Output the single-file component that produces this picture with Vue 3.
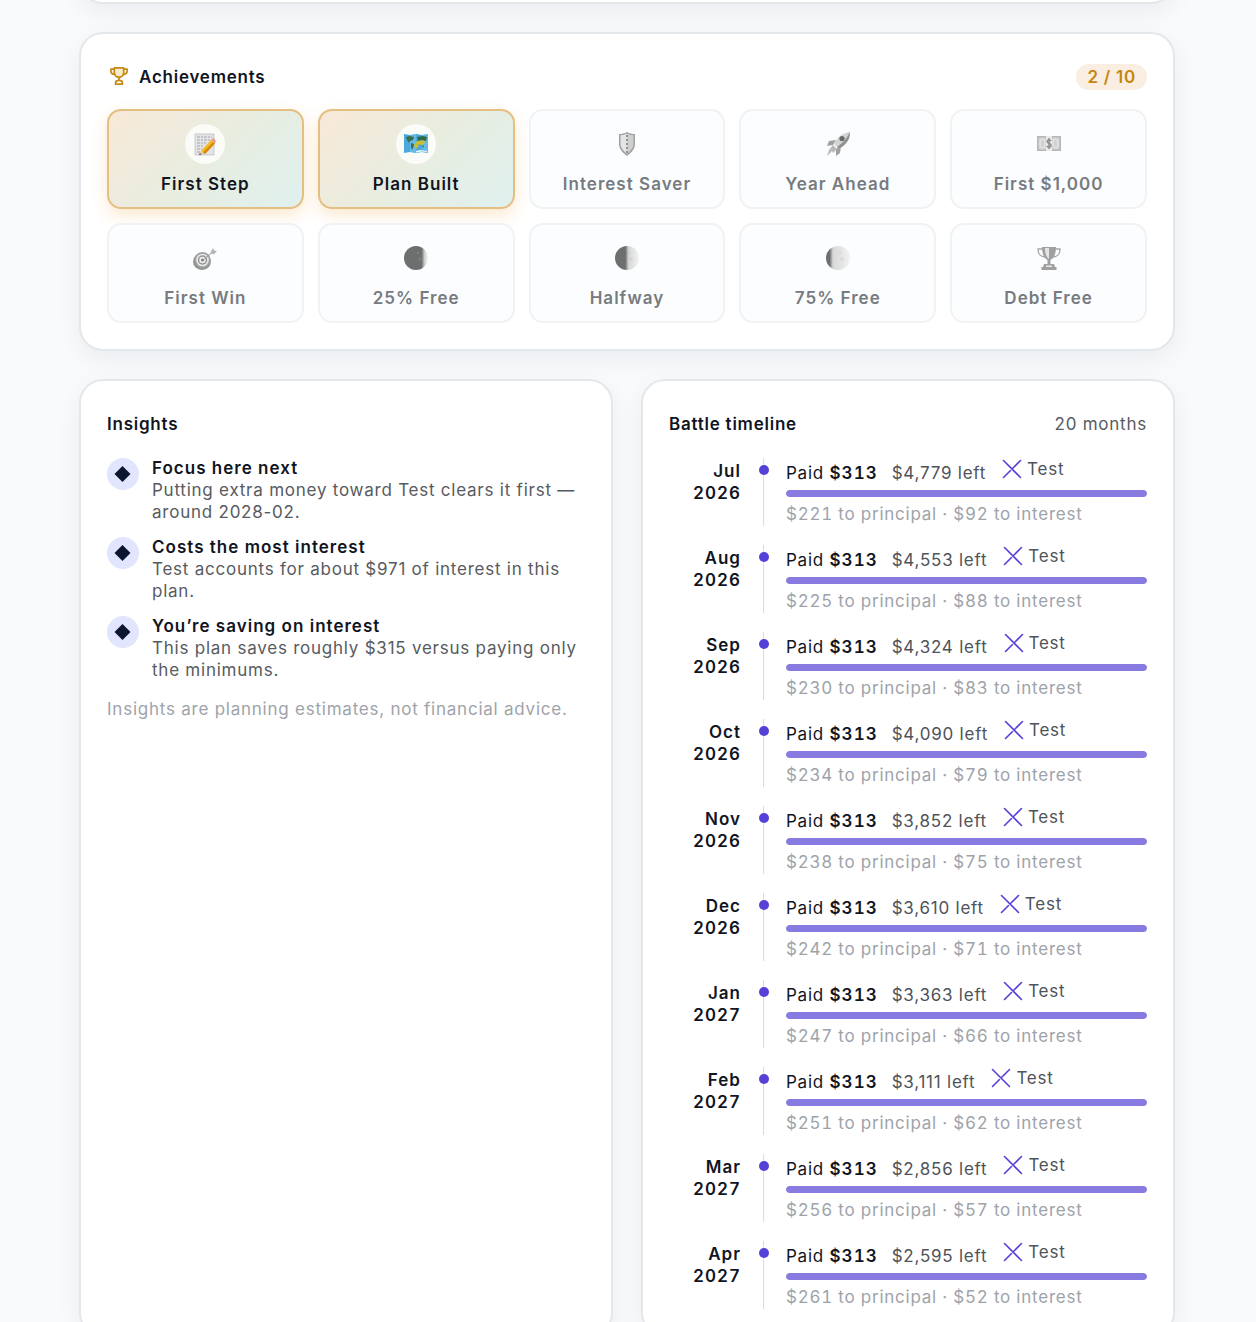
<template>
  <main class="page">
    <section class="card card-above" aria-hidden="true"></section>

    <section class="card">
      <header class="card-head">
        <h2 class="card-title">
          <svg class="title-icon" viewBox="2 2 20 21" fill="none" stroke="currentColor" stroke-width="2" stroke-linejoin="round" stroke-linecap="round">
            <path fill="#fbecc8" d="M6.500 3h11v5.500c0 3.200-2.300 5.500-5.500 5.500s-5.500-2.300-5.500-5.500z" />
            <path d="M6.500 4.500H2.500v1.500c0 2.600 1.700 4.500 4.500 4.500M17.500 4.500h4v1.500c0 2.600-1.700 4.500-4.500 4.500M12 14v3.500M8 22v-1.500c0-1.800 1.500-3 4-3s4 1.200 4 3V22z" />
          </svg>
          Achievements
        </h2>
        <span class="count">2 / 10</span>
      </header>

      <ul class="badges">
        <li v-for="badge in badges" :key="badge.name" :class="['badge', { earned: badge.earned }]">
          <span class="badge-icon">
            <!-- memo and pencil -->
            <svg v-if="badge.icon === 'memo'" viewBox="0 0 24 24">
              <path fill="#e3e4e6" stroke="#b9bcc0" stroke-width=".7" d="M2 2h19v21H2z" />
              <path stroke="#a4a7ab" stroke-width="1" stroke-dasharray="3 1 2 1" d="M4 5h15M4 8h14M4 11h9M4 14h7M4 17h5M4 20h4" />
              <path fill="#f5b921" d="M8 19L18 8l4 3.500L12 22z" />
              <path fill="#d78a12" d="M10 20.500L20 10l2 1.500L12 22z" />
              <path fill="#ef9a8d" d="M18 8l1.500-1.700c.8-.8 3.800 1.800 3.300 3L22 11.500z" />
              <path fill="#e7c79b" d="M8 19l4 3-5.500 1z" />
              <path fill="#444" d="M6.900 21l1.600 1.600-2.500.5z" />
            </svg>

            <!-- world map -->
            <svg v-else-if="badge.icon === 'map'" viewBox="0 0 24 24">
              <path fill="#49a8dc" d="M0 2l6 1 6-1 6 1 6-1v19l-6-1-6 1-6-1-6 1z" />
              <path fill="#7cc7ec" d="M6 3l6-1v19l-6-1zM18 3l6-1v19l-6-1z" opacity=".6" />
              <path fill="#3d6d4d" d="M2 5l4-1 4 1-1 3-3 1-1 2-2-3zM7 11l3 1-1 4-1 2-1-3z" />
              <path fill="#c9bf32" d="M12 10l4-2 5 1-1 3-3 1-2-1-1 3-2 2-2-4z" />
              <path fill="#2f6b4a" d="M13 5l6-1 4 1-1 4-4-1-4 1zM18 13l2 1-1 2z" />
              <path fill="#e9f7fc" d="M12 19l4-1 7 1v1l-5-.500-6 1z" />
            </svg>

            <!-- shield -->
            <svg v-else-if="badge.icon === 'shield'" viewBox="0 0 24 24">
              <path fill="#8a8988" d="M12 0c2.500 1.500 5 2 8 2v10c0 5-4 9-8 12-4-3-8-7-8-12V2c3 0 5.500-.5 8-2z" />
              <path fill="#c4c4c4" d="M12 1.500c2 1 4 1.500 6.500 1.700V12c0 4-3.500 7.500-6.500 10z" />
              <path fill="#e0e0e0" d="M12 1.500c-2 1-4 1.500-6.500 1.700V12c0 4 3.500 7.500 6.500 10z" />
              <path stroke="#777" stroke-width="2" stroke-dasharray="2 2" d="M12 3v18" />
            </svg>

            <!-- rocket -->
            <svg v-else-if="badge.icon === 'rocket'" viewBox="0 0 24 24">
              <path fill="#8a8a8a" d="M10 8L3 9l-2 5 6-1zM15 14l-1 7-4 3 0-7z" />
              <path fill="#c9c9c9" d="M24 0c0 7-3 12-11 17l-5-5C12 4 17 1 24 0z" />
              <path fill="#777" d="M24 0c0 7-3 12-11 17l-2-2c6-4 10-9 13-15z" />
              <circle cx="16" cy="6.500" r="2.600" fill="#444" />
              <path fill="#a8a8a8" d="M7 13l4 4-4 4-1-2-5 5 2-6z" />
            </svg>

            <!-- banknote -->
            <svg v-else-if="badge.icon === 'cash'" viewBox="0 0 24 24">
              <path fill="#a6a6a6" d="M0 4h24v15H0z" />
              <path fill="#c8c8c8" d="M1.500 5.500h21v12h-21z" />
              <path fill="#e6e6e6" d="M9 4h6v15H9z" />
              <ellipse cx="5.500" cy="11.500" rx="2.500" ry="4.500" fill="none" stroke="#ededed" />
              <ellipse cx="18.500" cy="11.500" rx="2.500" ry="4.500" fill="none" stroke="#ededed" />
              <path fill="none" stroke="#6f6f6f" stroke-width="1.400" d="M14 9c-1-1.500-4-1.300-4 .6 0 2.400 4.200 1.400 4.200 3.800 0 2-3.400 2.200-4.400.4M12 6v11" />
            </svg>

            <!-- dartboard -->
            <svg v-else-if="badge.icon === 'target'" viewBox="0 0 24 24">
              <ellipse cx="9" cy="15.500" rx="9" ry="8.500" fill="#777" />
              <circle cx="9.500" cy="14" r="8" fill="#8b8b8b" />
              <circle cx="9.500" cy="14" r="6.300" fill="#e3e3e3" />
              <circle cx="9.500" cy="14" r="4.700" fill="#7c7c7c" />
              <circle cx="9.500" cy="14" r="3.200" fill="#ededed" />
              <circle cx="9.500" cy="14" r="1.600" fill="#666" />
              <path stroke="#777" stroke-width="1" d="M10 14L21 5" />
              <path fill="#a3a3a3" d="M17.500 6.500L20 2l1 2.500 3 .5-3.500 3.500z" />
            </svg>

            <!-- moon phases, `lit` is the left edge of the bright side -->
            <svg v-else-if="badge.icon === 'moon'" viewBox="0 0 24 24">
              <defs>
                <linearGradient :id="'moon' + badge.lit">
                  <stop :offset="(badge.lit - 7) + '%'" stop-color="#4a4c4b" />
                  <stop :offset="(badge.lit + 7) + '%'" stop-color="#cfcfcf" />
                  <stop offset="100%" stop-color="#f0f0f0" />
                </linearGradient>
              </defs>
              <circle cx="12" cy="12" r="12" :fill="`url(#moon${badge.lit})`" />
              <circle cx="14" cy="7" r="1.500" fill="#999" opacity=".2" />
              <circle cx="16" cy="13" r="2" fill="#999" opacity=".2" />
            </svg>

            <!-- trophy -->
            <svg v-else viewBox="0 0 24 24">
              <path fill="none" stroke="#929292" stroke-width="1.400" d="M6 3H1c0 5 3 8 7 8M18 3h5c0 5-3 8-7 8" />
              <path fill="#8a8a8a" d="M5 1h14c0 7-2 11-5.500 13v4h-3v-4C7 12 5 8 5 1z" />
              <path fill="#dedede" d="M8 2h4v11c-3-2-4-6-4-11z" />
              <path fill="#8a8a8a" d="M7 18h10l1 3h1.500v3h-15v-3H6z" />
              <path fill="#e5e5e5" d="M9 19.500h6v1.500H9z" />
            </svg>
          </span>
          <span class="badge-name">{{ badge.name }}</span>
        </li>
      </ul>
    </section>

    <div class="columns">
      <section class="card">
        <header class="card-head">
          <h2 class="card-title">Insights</h2>
        </header>
        <ul class="insights">
          <li v-for="item in insights" :key="item.title" class="insight">
            <span class="insight-icon">
              <svg viewBox="0 0 16 16"><path fill="#0c1530" d="M7.500 0l8 8-8 8-8-8z" /></svg>
            </span>
            <div>
              <h3 class="insight-title">{{ item.title }}</h3>
              <p class="insight-text">{{ item.text }}</p>
            </div>
          </li>
        </ul>
        <p class="note">Insights are planning estimates, not financial advice.</p>
      </section>

      <section class="card">
        <header class="card-head">
          <h2 class="card-title">Battle timeline</h2>
          <span class="months">20 months</span>
        </header>
        <ol class="timeline">
          <li v-for="row in timeline" :key="row.month + row.year" class="row">
            <div class="date">{{ row.month }}<br>{{ row.year }}</div>
            <div class="rail"><span class="dot"></span></div>
            <div class="detail">
              <div class="summary">
                <span class="paid">Paid <strong>$313</strong></span>
                <span class="left">{{ row.left }} left</span>
                <span class="target">
                  <svg class="swords" viewBox="0 0 20 20" fill="none" stroke="currentColor" stroke-width="1.600" stroke-linecap="round">
                    <path d="M1.500 1.500l17 17M18.500 1.500l-7.500 7.500M8.500 11.500l-7 7" />
                  </svg>
                  Test
                </span>
              </div>
              <div class="bar"><div class="bar-fill" :style="{ width: row.share + '%' }"></div></div>
              <p class="split">{{ row.principal }} to principal · {{ row.interest }} to interest</p>
            </div>
          </li>
        </ol>
      </section>
    </div>
  </main>
</template>

<script setup>
const badges = [
  { name: 'First Step', icon: 'memo', earned: true },
  { name: 'Plan Built', icon: 'map', earned: true },
  { name: 'Interest Saver', icon: 'shield' },
  { name: 'Year Ahead', icon: 'rocket' },
  { name: 'First $1,000', icon: 'cash' },
  { name: 'First Win', icon: 'target' },
  { name: '25% Free', icon: 'moon', lit: 80 },
  { name: 'Halfway', icon: 'moon', lit: 50 },
  { name: '75% Free', icon: 'moon', lit: 22 },
  { name: 'Debt Free', icon: 'trophy' }
]

const insights = [
  { title: 'Focus here next', text: 'Putting extra money toward Test clears it first — around 2028-02.' },
  { title: 'Costs the most interest', text: 'Test accounts for about $971 of interest in this plan.' },
  { title: 'You’re saving on interest', text: 'This plan saves roughly $315 versus paying only the minimums.' }
]

const timeline = [
  { month: 'Jul', year: 2026, left: '$4,779', principal: '$221', interest: '$92', share: 100 },
  { month: 'Aug', year: 2026, left: '$4,553', principal: '$225', interest: '$88', share: 100 },
  { month: 'Sep', year: 2026, left: '$4,324', principal: '$230', interest: '$83', share: 100 },
  { month: 'Oct', year: 2026, left: '$4,090', principal: '$234', interest: '$79', share: 100 },
  { month: 'Nov', year: 2026, left: '$3,852', principal: '$238', interest: '$75', share: 100 },
  { month: 'Dec', year: 2026, left: '$3,610', principal: '$242', interest: '$71', share: 100 },
  { month: 'Jan', year: 2027, left: '$3,363', principal: '$247', interest: '$66', share: 100 },
  { month: 'Feb', year: 2027, left: '$3,111', principal: '$251', interest: '$62', share: 100 },
  { month: 'Mar', year: 2027, left: '$2,856', principal: '$256', interest: '$57', share: 100 },
  { month: 'Apr', year: 2027, left: '$2,595', principal: '$261', interest: '$52', share: 100 }
]
</script>

<style>
body {
  background: #f9fafc;
}
</style>

<style scoped>
.page {
  padding: 0 81px 28px 79px;
  display: flex;
  flex-direction: column;
  gap: 28px;
  overflow: hidden;
  font-family: Inter, "Liberation Sans", sans-serif;
  font-size: 17px;
  line-height: 22px;
  letter-spacing: 0.045em;
  color: #11151f;
}

h2, h3, p, ul, ol {
  margin: 0;
  padding: 0;
  font-size: inherit;
  list-style: none;
}

.card {
  box-sizing: border-box;
  min-width: 0;
  padding: 26px;
  background: #fff;
  border: 2px solid #e5e8eb;
  border-radius: 24px;
  box-shadow: 0 8px 24px rgba(15, 23, 42, 0.06);
}

/* tail of the card scrolled off the top */
.card-above {
  height: 60px;
  margin-top: -56px;
}

.card-head {
  display: flex;
  align-items: center;
  justify-content: space-between;
  height: 33px;
  margin-bottom: 16px;
}

.card-title {
  display: flex;
  align-items: center;
  font-weight: 600;
}

.title-icon {
  width: 18px;
  height: 18px;
  margin: 0 11px 2px 3px;
  color: #c58a14;
}

.count {
  padding: 2px 11px;
  border-radius: 13px;
  background: #f9eee1;
  color: #c5860f;
  font-weight: 600;
}

/* achievements */
.badges {
  display: grid;
  grid-template-columns: repeat(5, 1fr);
  gap: 14px;
}

.badge {
  display: flex;
  flex-direction: column;
  align-items: center;
  gap: 9px;
  padding: 13px 8px 12px;
  border: 2px solid #f0f2f3;
  border-radius: 14px;
  background: #fbfdfe;
  color: #777b80;
  font-weight: 600;
}

.badge-name,
.insight-title {
  letter-spacing: 0.06em;
}

.badge-icon {
  display: flex;
  align-items: center;
  justify-content: center;
  width: 40px;
  height: 40px;
  border-radius: 50%;
  opacity: 0.8;
}

.badge-icon svg {
  width: 24px;
  height: 24px;
}

.badge.earned {
  border-color: #e5be82;
  background: linear-gradient(135deg, #f9e9d8, #e8ede0 50%, #dff1ef);
  background-origin: border-box;
  box-shadow: 0 6px 16px rgba(240, 160, 50, 0.24);
  color: #11151f;
}

.earned .badge-icon {
  background: #fbfbf7;
  opacity: 1;
}

/* lower columns */
.columns {
  display: grid;
  grid-template-columns: 1fr 1fr;
  gap: 28px;
}

.insights {
  display: flex;
  flex-direction: column;
  gap: 13px;
  padding-top: 1px;
}

.insight {
  display: flex;
  gap: 13px;
}

.insight-icon {
  display: flex;
  flex: none;
  align-items: center;
  justify-content: center;
  width: 32px;
  height: 32px;
  margin-top: 1px;
  border-radius: 50%;
  background: #e1e5fd;
}

.insight-icon svg {
  width: 16px;
  height: 16px;
  overflow: visible;
}

.insight-title {
  font-weight: 600;
}

.insight-text,
.months {
  color: #575b61;
}

.note {
  margin-top: 17px;
  color: #9ea3aa;
}

.timeline {
  display: flex;
  flex-direction: column;
  gap: 19px;
  padding-top: 2px;
}

.row {
  display: grid;
  grid-template-columns: 72px 13px 1fr;
  column-gap: 16px;
  height: 68px;
}

.date {
  padding-top: 2px;
  text-align: right;
  font-weight: 600;
  letter-spacing: 0.06em;
  font-variant-numeric: tabular-nums;
}

.rail {
  display: flex;
  justify-content: center;
  padding-top: 7px;
  background: linear-gradient(#e6dcc6, #e6dcc6) center / 1px 100% no-repeat;
}

.dot {
  width: 10px;
  height: 10px;
  border-radius: 50%;
  background: #5540d8;
}

.summary {
  display: flex;
  align-items: flex-start;
  gap: 14px;
  height: 32px;
}

.paid,
.left {
  padding-top: 4px;
}

.paid strong {
  font-weight: 600;
  letter-spacing: 0.06em;
  font-variant-numeric: tabular-nums;
}

.left,
.target {
  color: #4f535a;
}

.target {
  display: flex;
  align-items: center;
  gap: 5px;
  margin-left: 2px;
}

.swords {
  width: 20px;
  height: 20px;
  color: #5540d8;
}

.bar {
  height: 7px;
  border-radius: 4px;
  background: #eceafa;
  overflow: hidden;
}

.bar-fill {
  height: 100%;
  border-radius: 4px;
  background: #877be2;
}

.split {
  margin-top: 6px;
  color: #9ea3aa;
  font-variant-numeric: tabular-nums;
}

@media (max-width: 900px) {
  .page {
    padding: 0 20px 28px;
  }

  .badges {
    grid-template-columns: repeat(2, 1fr);
  }

  .columns {
    grid-template-columns: 1fr;
  }
}
</style>
